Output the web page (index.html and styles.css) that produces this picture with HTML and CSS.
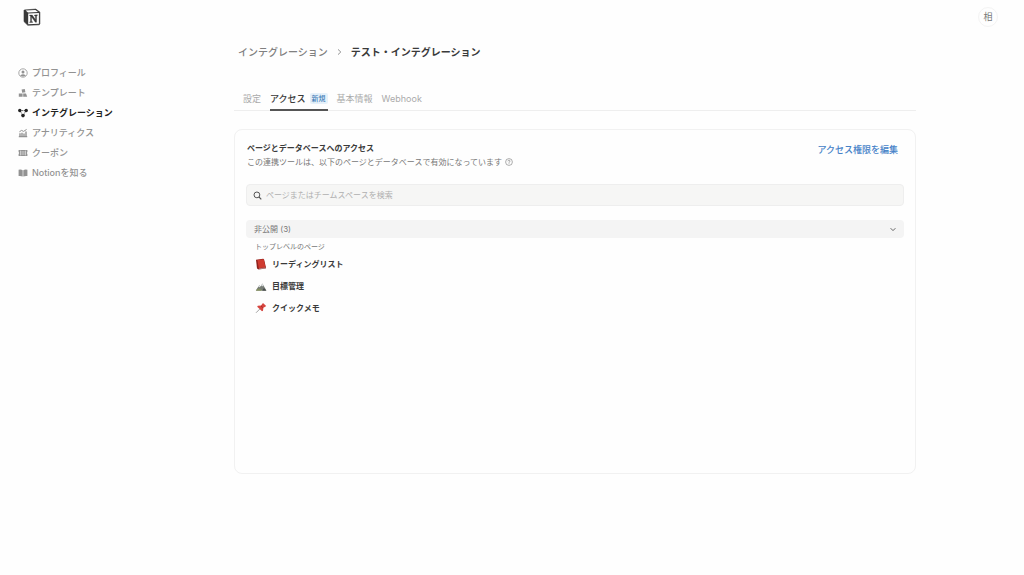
FILE: index.html
```html
<!DOCTYPE html>
<html lang="ja">
<head>
<meta charset="UTF-8">
<meta name="viewport" content="width=device-width, initial-scale=1.0">
<title>テスト・インテグレーション</title>
<link rel="stylesheet" href="styles.css">
</head>
<body>
<header class="topbar">
    <a href="#" class="logo" aria-label="Notion">
        <svg width="18" height="18" viewBox="0 0 18 18">
            <path d="M1.4 1.9 L12.8 1.1 L16.9 4.1 V16 L16.2 16.8 L4.8 17.3 L1 13.6 V2.3 Z" fill="#383838" stroke="#383838" stroke-width=".6" stroke-linejoin="round"/>
            <path d="M2.6 2.6 L12.4 1.9 L15 3.9 L5 4.5 Z" fill="#fff"/>
            <path d="M5.2 5.6 L15.9 5 V15.7 L5.2 16.3 Z" fill="#fff"/>
            <path d="M6.6 7.1 L9.3 7 L12.4 11.6 V8 L11.4 7.7 V7 L14.4 6.8 V7.5 L13.6 7.9 V14.2 L12.3 14.3 L8.6 8.9 V13.5 L9.6 13.8 V14.4 L6.7 14.6 V13.9 L7.5 13.6 V8 L6.6 7.7 Z" fill="#383838" stroke="#383838" stroke-width=".3"/>
        </svg>
    </a>
    <button class="avatar" type="button">相</button>
</header>
<div class="layout">
    <nav class="sidebar">
        <a href="#" class="nav-item">
            <svg class="icon" viewBox="0 0 10 10"><circle cx="5" cy="5" r="4.2" fill="none" stroke="currentColor" stroke-width=".8"/><circle cx="5" cy="4" r="1.5" fill="currentColor"/><path d="M2.2 7.6 Q5 4.8 7.8 7.6 Q5 9.6 2.2 7.6" fill="currentColor"/></svg>
            プロフィール
        </a>
        <a href="#" class="nav-item">
            <svg class="icon" viewBox="0 0 10 10"><path d="M3.6 1.6 L6.8 1 L7.4 4.2 L4.2 4.8 Z M.8 5.6 H4.6 V8.8 H.8 Z" fill="currentColor"/><path d="M5.2 5.4 H8 L9.2 8.8 H5.2 Z" fill="currentColor"/></svg>
            テンプレート
        </a>
        <a href="#" class="nav-item active">
            <svg class="icon" viewBox="0 0 10 10"><path d="M2 2.6 H8 M2 2.6 L5 7.8 M8 2.6 L5 7.8" stroke="currentColor" stroke-width=".7" stroke-dasharray="1.4 .5"/><circle cx="1.8" cy="2.5" r="1.7" fill="currentColor"/><circle cx="8.2" cy="2.5" r="1.7" fill="currentColor"/><circle cx="5" cy="7.6" r="1.8" fill="currentColor"/></svg>
            インテグレーション
        </a>
        <a href="#" class="nav-item">
            <svg class="icon" viewBox="0 0 10 10"><path d="M.8 8.6 H9.2 M2 8 V5.2 M4 8 V4.8 M6 8 V5.4 M8 8 V3.6" stroke="currentColor" stroke-width="1.4"/><path d="M1.4 3.8 L3.6 2.4 L5.6 3.4 L8.6 1.4" fill="none" stroke="currentColor" stroke-width="1"/></svg>
            アナリティクス
        </a>
        <a href="#" class="nav-item">
            <svg class="icon" viewBox="0 0 10 10"><path d="M.6 2 H9.4 V4 Q8.2 5 9.4 6 V8 H.6 V6 Q1.8 5 .6 4 Z" fill="currentColor"/><path d="M3.4 4 H6.6 M3.4 6 H6.6 M2.6 2.6 V7.4 M7.4 2.6 V7.4" stroke="#fff" stroke-width=".6"/></svg>
            クーポン
        </a>
        <a href="#" class="nav-item">
            <svg class="icon" viewBox="0 0 10 10"><path d="M.6 1.8 Q3 1.2 4.7 2.2 V8.6 Q3 7.6 .6 8 Z M9.4 1.8 Q7 1.2 5.3 2.2 V8.6 Q7 7.6 9.4 8 Z" fill="currentColor"/></svg>
            Notionを知る
        </a>
    </nav>
    <main class="content">
        <div class="breadcrumb">
            <a href="#">インテグレーション</a>
            <svg width="5" height="8" viewBox="0 0 5 8"><path d="M1 1.4 L3.8 4 L1 6.6" fill="none" stroke="#888" stroke-width=".9"/></svg>
            <h1>テスト・インテグレーション</h1>
        </div>
        <div class="tabs" role="tablist">
            <button class="tab" type="button" role="tab">設定</button>
            <button class="tab selected" type="button" role="tab" aria-selected="true">アクセス <span class="tag">新規</span></button>
            <button class="tab" type="button" role="tab">基本情報</button>
            <button class="tab" type="button" role="tab">Webhook</button>
        </div>
        <section class="card">
            <div class="card-head">
                <div>
                    <h2>ページとデータベースへのアクセス</h2>
                    <p>この連携ツールは、以下のページとデータベースで有効になっています
                        <svg class="help" viewBox="0 0 8 8"><circle cx="4" cy="4" r="3.4" fill="none" stroke="currentColor" stroke-width=".6"/><path d="M2.9 3.3 Q3 2.2 4 2.2 T5.1 3.2 Q5 3.8 4 4.2 V4.8 M4 5.3 V6" fill="none" stroke="currentColor" stroke-width=".6"/></svg>
                    </p>
                </div>
                <a href="#" class="edit-link">アクセス権限を編集</a>
            </div>
            <label class="search">
                <svg width="9" height="9" viewBox="0 0 9 9"><circle cx="3.9" cy="3.9" r="2.9" fill="none" stroke="#555" stroke-width="1"/><path d="M6 6 L8.3 8.3" stroke="#555" stroke-width="1.1"/></svg>
                <input type="text" placeholder="ページまたはチームスペースを検索" aria-label="検索">
            </label>
            <button class="group" type="button" aria-expanded="true">
                非公開 (3)
                <svg width="6" height="5" viewBox="0 0 6 5"><path d="M.6 1.2 L3 3.6 L5.4 1.2" fill="none" stroke="#555" stroke-width=".9"/></svg>
            </button>
            <h3>トップレベルのページ</h3>
            <ul class="pages">
                <li>
                    <svg width="12" height="12" viewBox="0 0 12 12"><path d="M1 1.8 L8.2 .8 L9 1.2 L11 9.6 L10.8 10.4 L3.6 11.4 L2 10.4 Z" fill="#8f211c"/><path d="M2.4 2 L8.8 1.2 L10.4 9.2 L3.8 10.2 Z" fill="#cf3b30"/><path d="M4 10.9 L10.6 9.9" stroke="#ddd" stroke-width=".5"/></svg>
                    リーディングリスト
                </li>
                <li>
                    <svg width="12" height="12" viewBox="0 0 12 12"><path d="M.8 10.6 L4.4 5 L5.6 6.4 L7.4 3.4 L11.4 10.6 Z" fill="#777c76"/><path d="M7.4 3.4 L6.2 5.6 L7.2 6.6 L8 5.8 L8.8 6.4 Z M4.4 5 L3.2 6.8 L4.4 7.2 L5.4 6.4 Z" fill="#dde1e3"/><path d="M.8 10.8 L2.8 8.6 L5.4 9 L7 10.8 Z" fill="#84905f"/><path d="M7 10.8 L9 8 L11.4 10.8 Z" fill="#474c4a"/></svg>
                    目標管理
                </li>
                <li>
                    <svg width="12" height="12" viewBox="0 0 12 12"><path d="M4.8 7 L1 10.8" stroke="#8a8a8a" stroke-width=".8"/><path d="M8 1 L11.2 4 L10.2 4.8 L8.4 5.8 L8 8.8 L7 9.2 L2.2 4.8 L2.8 3.8 L6 3.6 L7.2 2 Z" fill="#d6453f"/><path d="M6.2 4.2 L7.8 5.6" stroke="#9c211f" stroke-width=".9"/></svg>
                    クイックメモ
                </li>
            </ul>
        </section>
    </main>
</div>
</body>
</html>
```
FILE: styles.css
```css
* {
    box-sizing: border-box;
}
body {
    margin: 0;
    font-family: Inter, "Noto Sans CJK JP", sans-serif;
    font-size: 9px;
    line-height: 12px;
    color: #3a3a3a;
    background-color: #fefefe;
}
h1, h2, h3, p, ul {
    margin: 0;
    padding: 0;
}
a {
    color: inherit;
    text-decoration: none;
}
button, input {
    font: inherit;
    color: inherit;
    border: none;
    background: none;
    padding: 0;
}
button {
    cursor: pointer;
}
.topbar {
    display: flex;
    align-items: center;
    justify-content: space-between;
    height: 34px;
    padding: 0 26px 0 23px;
}
.logo svg {
    display: block;
}
.avatar {
    width: 20px;
    height: 20px;
    border: 1px solid #f3f3f3;
    border-radius: 50%;
    color: #777;
}
.layout {
    display: grid;
    grid-template-columns: 216px minmax(0, 1fr);
    padding: 0 108px 0 18px;
}
.sidebar {
    padding-top: 29px;
}
.nav-item {
    display: flex;
    align-items: center;
    gap: 4px;
    height: 20px;
    color: #929292;
    font-weight: 500;
}
.nav-item.active {
    color: #222;
    font-weight: 600;
}
.icon {
    width: 10px;
    height: 10px;
}
.breadcrumb {
    display: flex;
    align-items: center;
    gap: 9px;
    height: 16px;
    margin: 10px 0 26px 4px;
    font-size: 10px;
    color: #808080;
    font-weight: 500;
}
.breadcrumb h1 {
    font-size: 10px;
    font-weight: 600;
    color: #3a3a3a;
}
.tabs {
    display: flex;
    gap: 9px;
    height: 25px;
    padding-left: 9px;
    border-bottom: 1px solid #eee;
}
.tab {
    display: flex;
    align-items: center;
    gap: 4px;
    height: 25px;
    padding-top: 2px;
    color: #aaa;
    border-bottom: 2px solid transparent;
}
.tab.selected {
    color: #3a3a3a;
    font-weight: 500;
    border-bottom-color: #555;
}
.tag {
    padding: 0 2px;
    font-size: 7px;
    line-height: 11px;
    border-radius: 2px;
    color: #4580b8;
    background-color: #e6f1fa;
}
.card {
    min-height: 60vh;
    margin-top: 18px;
    padding: 11px;
    padding-bottom: 12px;
    border: 1px solid #f1f1f1;
    border-radius: 8px;
}
.card-head {
    display: flex;
    align-items: flex-start;
    justify-content: space-between;
    height: 28px;
}
h2 {
    font-size: 8px;
    line-height: 14px;
    font-weight: 600;
}
.card-head > div {
    padding-left: 1px;
}
.card-head p {
    display: flex;
    align-items: center;
    gap: 3px;
    font-size: 8px;
    line-height: 14px;
    color: #777;
}
.help {
    width: 8px;
    height: 8px;
}
.edit-link {
    margin: 3px 6px 0 0;
    color: #4682c8;
    font-weight: 500;
}
.search {
    display: flex;
    align-items: center;
    gap: 4px;
    height: 22px;
    margin: 15px 0 14px;
    padding: 0 6px;
    border: 1px solid #eee;
    border-radius: 4px;
    background-color: #f6f6f5;
}
.search input {
    flex: 1;
    font-size: 8px;
    outline: none;
}
.search input::placeholder {
    color: #b0b0b0;
}
.group {
    display: flex;
    align-items: center;
    justify-content: space-between;
    width: 100%;
    height: 18px;
    padding: 0 8px;
    font-size: 8px;
    border-radius: 4px;
    color: #777;
    background-color: #f4f4f4;
}
h3 {
    margin: 3px 0 0 9px;
    font-size: 7px;
    line-height: 12px;
    font-weight: 400;
    color: #777;
}
.pages {
    padding-left: 9px;
    list-style: none;
}
.pages li {
    display: flex;
    align-items: center;
    gap: 5px;
    height: 22px;
    font-size: 8px;
    font-weight: 600;
}
```
